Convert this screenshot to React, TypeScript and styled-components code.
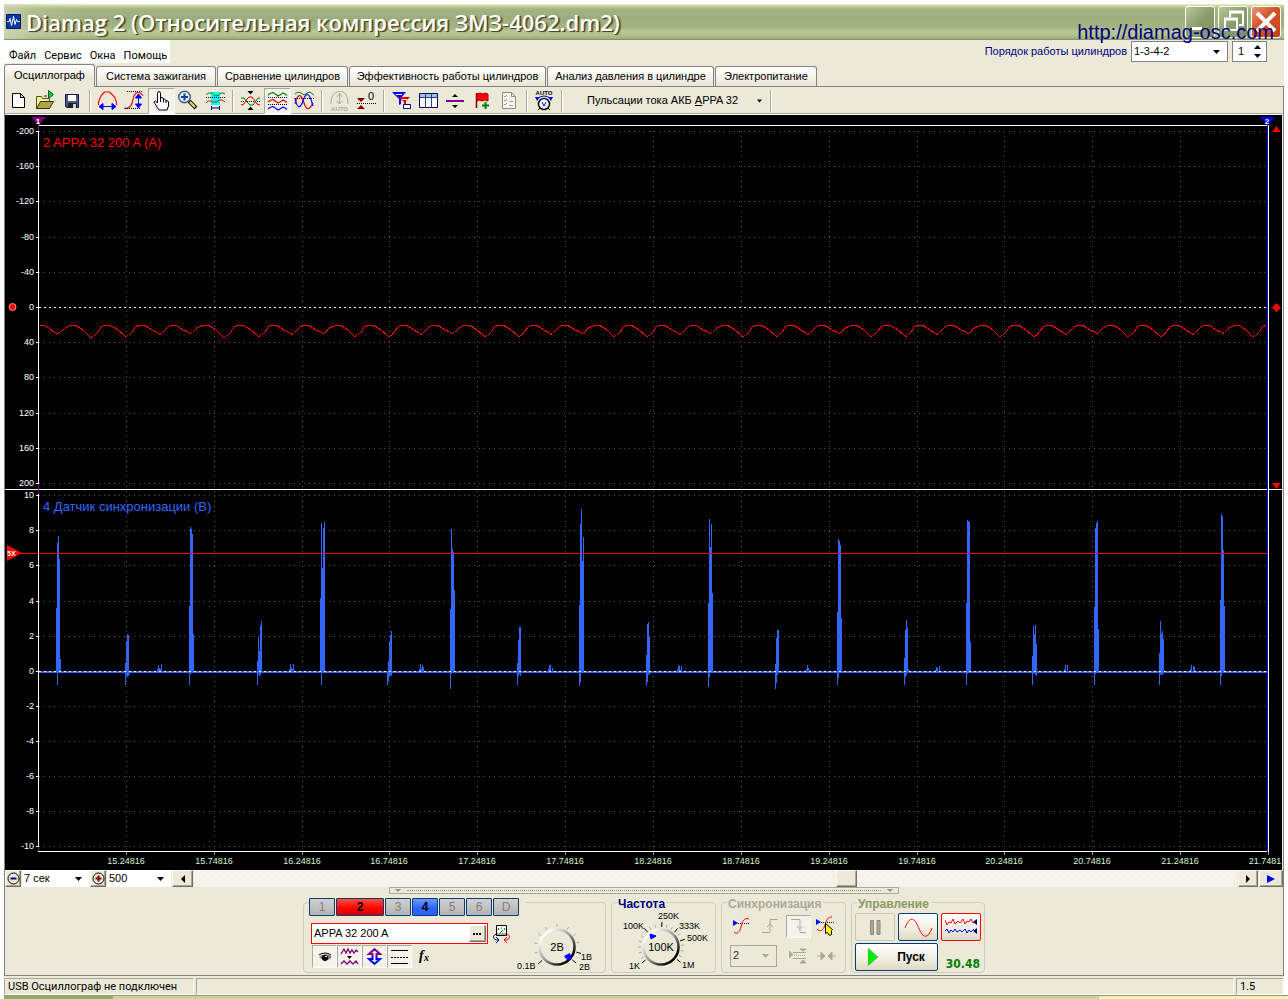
import React from "react";
import styled, { createGlobalStyle, css } from "styled-components";

const FACE = "#ece9d8";
const UI_FONT = `"Liberation Sans", Arial, sans-serif`;
const MENU_FONT = `Roboto, Tahoma, sans-serif`;

const Global = createGlobalStyle`
  * { box-sizing: border-box; }
  body { margin: 0; background: #fdfefe; font: 11px/13px ${UI_FONT}; color: #000; }
  button, input, select { font: inherit; color: inherit; margin: 0; padding: 0; }
  svg { display: block; }
`;

const Page = styled.div`
  display: flex;
  flex-direction: column;
  min-height: 100vh;
  padding: 4px 4px 0;
`;

const Window = styled.main`
  position: relative;
  display: flex;
  flex-direction: column;
  background: ${FACE};
`;

/* ---------- title bar ---------- */

const TitleBar = styled.header`
  display: flex;
  align-items: center;
  height: 36px;
  padding: 0 3px 0 1px;
  border-bottom: 1px solid #839669;
  background:
    linear-gradient(90deg, rgba(212, 214, 184, 0.8) 0, rgba(200, 206, 168, 0.4) 28px, transparent 90px),
    linear-gradient(#eef7cf 0, #c8d69c 2px, #a3b383 5px, #9dad7c 14px, #a4b483 24px, #b9c795 27px, #b4c28f 31px, #96a777 36px);
`;

const Title = styled.h1`
  flex: 1;
  margin: 0 0 0 4px;
  color: #fff;
  font: 600 22px/30px "Open Sans", "Noto Sans", sans-serif;
  white-space: nowrap;
  text-shadow: 1px 1px 0 #4a4a20, 2px 1px 1px #5c5c30;
`;

const CaptionButtons = styled.div`
  display: flex;
  gap: 3px;
`;

const CaptionButton = styled.button<{ $close?: boolean }>`
  width: 30px;
  height: 32px;
  border: 1px solid #fff;
  border-radius: 3px;
  background: ${(p) =>
    p.$close
      ? "linear-gradient(135deg, #e8987a, #d4572f 40%, #c23f17)"
      : "linear-gradient(135deg, #b9c59a, #8b9d6b 50%, #7d9060)"};
`;

const SiteLink = styled.a`
  position: absolute;
  top: 17px;
  right: 10px;
  color: #000080;
  font-size: 20px;
  line-height: 22px;
  text-decoration: none;
`;

/* ---------- menu and cylinder order ---------- */

const MenuRow = styled.div`
  display: flex;
  align-items: flex-start;
  height: 24px;
`;

const Menu = styled.nav`
  display: flex;
  gap: 8px;
  width: 166px;
  height: 23px;
  padding: 8px 0 0 5px;
  background: #fdfefe;
  font-family: ${MENU_FONT};
`;

const MenuItem = styled.button`
  border: 0;
  background: none;
  line-height: 14px;
`;

const OrderForm = styled.form`
  display: flex;
  align-items: flex-start;
  gap: 4px;
  margin-left: auto;
  padding: 1px 17px 0 0;
`;

const OrderLabel = styled.label`
  color: #000080;
  line-height: 21px;
`;

const SelectBox = styled.span<{ $w: number; $h: number; $frame?: string; $back?: string }>`
  display: inline-grid;
  align-items: center;
  width: ${(p) => p.$w}px;
  height: ${(p) => p.$h}px;
  border: ${(p) => (p.$frame ? `1px solid ${p.$frame}` : "0")};
  background: ${(p) => p.$back ?? "#fff"};
  & > * { grid-area: 1 / 1; }
  & > svg { justify-self: end; margin-right: 7px; pointer-events: none; }
`;

const Select = styled.select`
  appearance: none;
  width: 100%;
  height: 100%;
  padding-left: 2px;
  border: 0;
  background: none;
`;

const Spin = styled.span`
  display: flex;
  width: 35px;
  height: 21px;
  border: 1px solid #848284;
  background: #fff;
`;

const SpinInput = styled.input`
  width: 18px;
  padding-left: 5px;
  border: 0;
  background: none;
`;

const SpinButtons = styled.span`
  display: grid;
  grid-template-rows: 1fr 1fr;
  width: 12px;
`;

const BareButton = styled.button`
  display: grid;
  place-items: center;
  border: 0;
  background: none;
`;

const Arrow = ({ dir = "down", color = "#000", size = 7 }: { dir?: "up" | "down" | "left" | "right"; color?: string; size?: number }) => {
  const path = { up: "M0 4h7L3.500 0z", down: "M0 0h7L3.500 4z", left: "M4 0v8L0 4z", right: "M0 0v8l4-4z" }[dir];
  const flat = dir === "up" || dir === "down";
  return (
    <svg width={flat ? size : 4} height={flat ? 4 : 8} viewBox={flat ? "0 0 7 4" : "0 0 4 8"}>
      <path d={path} fill={color} />
    </svg>
  );
};

/* ---------- tabs ---------- */

const TabRow = styled.div`
  display: flex;
  align-items: flex-end;
  gap: 1px;
  height: 22px;
`;

const Tab = styled.button<{ $w: number; $active?: boolean }>`
  width: ${(p) => p.$w}px;
  height: 20px;
  border: 1px solid #848284;
  border-bottom: 0;
  border-radius: 3px 3px 0 0;
  background: linear-gradient(#fff, #f4f2e8 60%, #e8e5d6);
  white-space: nowrap;
  ${(p) =>
    p.$active &&
    css`
      z-index: 1;
      height: 23px;
      margin-bottom: -1px;
      padding-bottom: 2px;
      background: linear-gradient(#fff, ${FACE} 60%);
    `}
`;

const TabPage = styled.section`
  display: flex;
  flex-direction: column;
  border: 1px solid #848284;
`;

/* ---------- toolbar ---------- */

const Toolbar = styled.div`
  display: flex;
  align-items: center;
  height: 28px;
  border-bottom: 1px solid #fff;
  box-shadow: inset 0 -1px 0 #aca899;
`;

const checker = css`
  background-color: #fff;
  background-image: conic-gradient(#ece9d8 25%, #fff 0 50%, #ece9d8 0 75%, #fff 0);
  background-size: 2px 2px;
`;

const ToolButton = styled.button<{ $pressed?: boolean }>`
  width: 27px;
  height: 26px;
  border: 1px solid transparent;
  background: none;
  ${(p) =>
    p.$pressed &&
    css`
      ${checker}
      border-color: #aca899 #fff #fff #aca899;
    `}
  & > svg { width: 25px; height: 24px; }
`;

const Separator = styled.span`
  width: 2px;
  height: 22px;
  margin: 0 3px;
  border-left: 1px solid #aca899;
  border-right: 1px solid #fff;
`;

const PresetButton = styled.button`
  display: flex;
  align-items: center;
  gap: 19px;
  margin-left: 16px;
  padding: 0 5px;
  border: 0;
  background: none;
  white-space: nowrap;
`;

const blueArrowH = (
  <path d="M4 17.500h17M4 17.500l4-3v6zM21 17.500l-4-3v6z" stroke="#00f" fill="#00f" />
);

const wave = (y: number, color: string) => (
  <path d={`M3 ${y}l2-1.500 3-1 3 2 2 1.500 2-1 3-2 2 1 2 1.500`} stroke={color} fill="none" strokeWidth="1.200" />
);

const dotted = (y: number, x1 = 3, x2 = 22) => (
  <path d={`M${x1} ${y}H${x2}`} stroke="#000" strokeDasharray="1 1" />
);

const icons: Record<string, React.ReactNode> = {
  create: <path d="M6.500 4.500h8l4 4v10h-12zM14.500 4.500v4h4" fill="#fff" stroke="#000" />,
  open: (
    <>
      <path d="M3.500 19.500v-12h5l1 2h7v4" fill="#f8f0a0" stroke="#555500" />
      <path d="M3.500 19.500l4-7h13l-4 7z" fill="#b0a848" stroke="#333300" />
      <path d="M15.500 1.500v8l5-4z" fill="#00d040" stroke="#006020" />
      <path d="M11 7h3" stroke="#222" />
    </>
  ),
  save: (
    <>
      <path d="M5.500 5.500h13v13h-12l-1-1z" fill="#4c5890" stroke="#101840" />
      <path d="M8 6h8v6H8z" fill="#fff" />
      <path d="M8 14h9v5H8z" fill="#202020" />
      <path d="M13 15h3v4h-3z" fill="#d0d0d0" />
    </>
  ),
  width: (
    <>
      <path d="M3.500 16v-3l2-5 2-3 2-2h5l2 2 3 3 2 5v3" fill="none" stroke="#f00" strokeWidth="1.200" />
      {blueArrowH}
    </>
  ),
  height: (
    <>
      <path d="M2 19.500c7 0 8-4 9-9s2-7 5-7 3 1 5 3" fill="none" stroke="#f00" strokeWidth="1.200" />
      {dotted(2.500, 5, 21)}
      {dotted(19.500, 3, 18)}
      <path d="M16.500 6v12M16.500 5l-3 4h6zM16.500 19l-3-4h6z" stroke="#00f" fill="#00f" />
    </>
  ),
  hand: (
    <path
      d="M8.500 14V4.500q0-2 1.500-2t1.500 2V10q0-2 1.500-1.500t1.500 1.500v.5q1-1.500 2.500 1v.5q2-1 2.500 1v4l-1.500 4h-8l-2-3-3-5q1.500-2 3 .5zM11.500 10v3M14.500 10.500v3M17 11.500v2.500"
      fill="#fff"
      stroke="#000"
    />
  ),
  zoom: (
    <>
      <path d="M13 12l7 7" stroke="#222" strokeWidth="4" />
      <path d="M14 13l5 5" stroke="#f0e060" strokeWidth="2" />
      <circle cx="8.500" cy="8" r="5.800" fill="#d8ecff" stroke="#4c5880" strokeWidth="1.400" />
      <path d="M5 8h7M8.500 4.500v7" stroke="#1040a0" strokeWidth="2" />
    </>
  ),
  segment: (
    <>
      <path d="M8 3h9v13H8z" fill="#0ff" />
      <path d="M3 5.500l3-1.500h3l2 2 2 1 3-1 2-2h2l2 1" stroke="#008000" fill="none" />
      {dotted(8.500)}
      <path d="M3 14l2-2h3l2 1h4l2-2h3l3 2" stroke="#c02000" fill="none" />
      <path d="M8.500 17v4M16.500 17v4M9 19h8" stroke="#000080" />
    </>
  ),
  zero: (
    <>
      {dotted(12.500)}
      <path d="M3 9l3 0 3 4 3 3h3l3-4 2-3h2" stroke="#008000" fill="none" />
      <path d="M3 16l3-1 3-5 2-2h3l3 4 2 3 3 1" stroke="#e00000" fill="none" />
      <path d="M9.500 2h6l-3 3.500zM9.500 21h6l-3-3.500z" fill="#000" />
    </>
  ),
  spread: (
    <>
      {wave(6, "#008000")}
      {dotted(8.500)}
      {wave(13, "#e00000")}
      {dotted(15.500)}
      {wave(20, "#00f")}
    </>
  ),
  overlay: (
    <>
      <path d="M3 5l3-2 3 1 3 2 3-2 3-1 4 3" stroke="#008000" fill="none" />
      {dotted(9.500)}
      <path d="M3 15c3-12 6-10 9-1s6 6 9 0" stroke="#e00000" fill="none" strokeWidth="1.200" />
      <path d="M3 9c2 10 5 12 8 3s6-10 10 5" stroke="#00f" fill="none" strokeWidth="1.200" />
    </>
  ),
  auto: (
    <>
      <path d="M4 15C4 7 7 3 12.500 2.500S21 7 21 15M12.500 4v11M9.500 8l3-3 3 3M9.500 12l3 3 3-3" stroke="#aca899" fill="none" />
      <text x="12.500" y="22" fontSize="6" fontWeight="bold" textAnchor="middle" fill="#aca899">AUTO</text>
    </>
  ),
  level: (
    <>
      <path d="M3 9h8l-4 4zM3 20h8l-4-4z" fill="#800000" />
      {dotted(14.500)}
      <text x="14" y="11" fontSize="11">0</text>
    </>
  ),
  filter: (
    <>
      <path d="M3 3h14l-5 6v6l-2 1V10z" fill="#00f" />
      <path d="M9 8h12l-4 4v6l-2 1v-6z" fill="#e00000" />
      <path d="M7 5.500h6M13 10.500h5" stroke="#fff" />
      <path d="M14.500 15.500h7v4h-7z" fill="#fff" stroke="#000080" />
    </>
  ),
  table: (
    <>
      <path d="M3.500 4.500h18v14h-18z" fill="#fff" stroke="#000060" />
      <path d="M4 5h17v3H4z" fill="#a0c0f0" />
      <path d="M4 8.500h17M9.500 5v14M15.500 5v14" stroke="#204080" />
    </>
  ),
  divide: (
    <>
      <path d="M3 12h18" stroke="#800080" strokeWidth="2" />
      <path d="M9 8h6l-3-3zM9 16h6l-3 3z" fill="#000" />
    </>
  ),
  flag: (
    <>
      <path d="M6.500 4v15" stroke="#800000" strokeWidth="1.500" />
      <path d="M7 5l3-1 3 1 2-1 3 1v7l-3-1-3 1-3-1-2 1z" fill="#f00" stroke="#a00000" />
      <path d="M15.500 13v7M12 16.500h7" stroke="#008000" strokeWidth="2" />
    </>
  ),
  list: (
    <>
      <path d="M5.500 3.500h9l4 4v12h-13zM14.500 3.500v4h4" fill="#f6f4ec" stroke="#908c80" />
      <path d="M7 7l1 1 2-2M7 11l1 1 2-2M7 15l1 1 2-2M12 12.500h4M12 16.500h4" stroke="#a09c90" fill="none" />
    </>
  ),
  autoSet: (
    <>
      <text x="12" y="6" fontSize="6" fontWeight="bold" textAnchor="middle">AUTO</text>
      <path d="M3 8h5l-3 4zM21 8h-5l3 4z" fill="#00f" />
      <path d="M6 9q6-4 12 0" stroke="#00f" fill="none" />
      <circle cx="12" cy="15" r="5.500" fill="#fff" stroke="#111" strokeWidth="1.600" />
      <path d="M10 13l2 4 2-4" stroke="#00f" fill="none" />
      <path d="M6 21l2-2M18 21l-2-2" stroke="#000" />
    </>
  ),
};

const toolGroups: { id: string; label: string; pressed?: boolean }[][] = [
  [{ id: "create", label: "Новый" }, { id: "open", label: "Открыть" }, { id: "save", label: "Сохранить" }],
  [
    { id: "width", label: "Ширина" },
    { id: "height", label: "Высота" },
    { id: "hand", label: "Рука", pressed: true },
    { id: "zoom", label: "Лупа" },
    { id: "segment", label: "Участок" },
  ],
  [{ id: "zero", label: "Ноль" }, { id: "spread", label: "Раздельно", pressed: true }, { id: "overlay", label: "Вместе" }],
  [{ id: "auto", label: "Авто" }, { id: "level", label: "Уровень нуля" }],
  [
    { id: "filter", label: "Фильтр" },
    { id: "table", label: "Таблица" },
    { id: "divide", label: "Разделить" },
    { id: "flag", label: "Маркер" },
    { id: "list", label: "Список" },
  ],
  [{ id: "autoSet", label: "Автоустановка" }],
];

/* ---------- chart ---------- */

const ChartSvg = styled.svg`
  width: calc(100% - 1px);
  height: auto;
  background: #000;
  font-family: ${UI_FONT};
`;

const upperY = [131, 166, 201, 237, 272, 307, 342, 377, 413, 448, 483];
const lowerY = [495, 530, 565, 601, 636, 671, 706, 741, 776, 811, 846];
const ticks = [
  ...upperY.map((y, i) => ({ y, v: (i - 5) * 40 })),
  ...lowerY.map((y, i) => ({ y, v: (5 - i) * 2 })),
];
const timeTicks = Array.from({ length: 14 }, (_, i) => ({
  x: Math.floor(126.4 + i * 87.85),
  label: i === 13 ? "21.7481" : (15.24816 + i * 0.5).toFixed(5),
}));

const dips: [number, number][] = [
  [57, 333], [90, 337], [125, 336], [159, 334], [189, 333], [223, 337], [258, 336], [291, 334],
  [322, 333], [354, 336], [388, 336], [420, 334], [451, 333], [484, 336], [518, 336], [550, 334],
  [581, 333], [613, 336], [646, 336], [679, 334], [709, 333], [742, 336], [776, 336], [807, 334],
  [838, 333], [870, 336], [905, 336], [936, 334], [967, 333], [999, 336], [1033, 336], [1065, 334],
  [1096, 333], [1127, 336], [1160, 336], [1192, 334], [1222, 333], [1252, 336],
];

const currentTrace = (() => {
  const pts: string[] = ["39,325", "44,325", "49,328", "54,332"];
  dips.forEach(([x, y], i) => {
    const next = dips[i + 1] ?? [1286, 333];
    const span = next[0] - x;
    const at = (t: number, py: number) => {
      const px = x + span * t;
      if (px <= 1267) pts.push(`${Math.round(px)},${py}`);
    };
    at(0, y);
    at(0.08, y - 1);
    at(0.2, y - 5);
    at(0.3, 326);
    at(0.4, 325);
    at(0.55, 325);
    at(0.68, 327);
    at(0.8, 330);
    at(0.93, next[1] - 2);
  });
  return pts.join(" ");
})();

/* One burst per entry: first column, tops of its columns, then the undershoot depths. */
const bursts: [number, number[], number[]][] = [
  [56, [608, 543, 536, 559, 659], [0, 685]],
  [125, [663, 641, 634, 635], [685, 675, 677, 676, 674]],
  [157, [669, 665, 668, 669, 664], []],
  [189, [606, 527, 529, 534, 634], [685, 674]],
  [257, [661, 637, 651, 626, 621], [685, 674, 676, 675]],
  [289, [669, 664, 668, 669, 664], []],
  [320, [598, 523, 568, 528, 522], [0, 685]],
  [387, [672, 661, 641, 635, 631], [685, 681, 676, 675, 676]],
  [419, [669, 664, 669, 665, 667], []],
  [450, [609, 529, 549, 552, 590], [689, 674]],
  [517, [663, 640, 627, 627], [685, 676, 674, 676]],
  [548, [669, 665, 665, 672, 668], []],
  [579, [605, 524, 509, 561, 537], [686, 682]],
  [646, [655, 624, 622, 636], [685, 682, 674, 675]],
  [677, [669, 665, 666, 670, 666], []],
  [708, [603, 519, 547, 524, 593], [687, 677]],
  [775, [664, 638, 630, 630], [689, 683, 675]],
  [806, [669, 665, 668, 672, 670], []],
  [837, [612, 539, 541, 545, 618], [685, 678]],
  [904, [658, 630, 620, 628, 669], [685, 677, 675]],
  [935, [670, 667, 668, 672, 666], []],
  [966, [603, 520, 521, 522, 642], [685, 674]],
  [1032, [656, 626, 634, 625, 644], [685, 674, 673, 675, 676]],
  [1064, [669, 665, 672, 665], []],
  [1094, [607, 528, 523, 521, 629], [685, 674]],
  [1159, [653, 621, 634, 631, 639], [685, 675, 674, 675]],
  [1190, [669, 665, 672, 666, 667], []],
  [1220, [600, 514, 516, 550, 606], [685, 676]],
];

const syncTrace = bursts
  .map(([x, tops, lows]) =>
    tops.map((t, i) => `M${x + i}.5 ${t}V672`).join("") +
    lows.map((l, i) => (l ? `M${x + i}.5 672V${l}` : "")).join(""),
  )
  .join("");

const Chart = () => (
  <ChartSvg viewBox="5 115 1277 755" role="img" aria-label="Осциллограмма">
    <g shapeRendering="crispEdges" fill="none">
      <path d={syncTrace} stroke="#3366ff" />
      <g stroke="#545454" strokeDasharray="1 4">
        {ticks.map((t) => (
          <path key={t.y} d={`M39 ${t.y}.5H1267`} />
        ))}
        {timeTicks.map((t) => (
          <path key={t.x} d={`M${t.x}.5 131V850`} />
        ))}
      </g>
      <path d="M39 672H1267" stroke="#3366ff" strokeWidth="2" />
      <path d="M39 307.500H1267M39 671.500H1267" stroke="#fff" strokeDasharray="2 3" />
      <polyline points={currentTrace} stroke="#f00" transform="translate(.5 .5)" />
      <path d="M8 553.500H1267" stroke="#f00" />
      <path d="M38 125.500H1268M38.500 125V852M38 851.500H1269M1268.500 125V852M5 489.500H1282" stroke="#fff" />
      <path d={ticks.map((t) => `M36 ${t.y}.5h2`).join("")} stroke="#fff" />
      <path d={timeTicks.map((t) => `M${t.x}.5 852v3`).join("")} stroke="#999" />
      <path d="M38.500 124v7M38.500 484v10M38.500 847v4" stroke="#800080" />
      <path d="M1267.500 124V852" stroke="#00f" />
    </g>
    <path d="M31 117h15l-7.500 8z" fill="#800080" />
    <path d="M1260 117h15l-7.500 8z" fill="#00f" />
    <text x="38" y="124" fontSize="8" fontWeight="bold" fill="#fff" textAnchor="middle">1</text>
    <text x="1267" y="124" fontSize="8" fontWeight="bold" fill="#fff" textAnchor="middle">2</text>
    <path d="M1272 132h9l-4.500-6zM1272 483h9l-4.500 6zM1272 307.500l4.500-4.500 4.500 4.500-4.500 4.500z" fill="#f00" />
    <circle cx="12.500" cy="307" r="3.500" fill="#f00" stroke="#ff9090" />
    <path d="M7 545l15 8-15 8z" fill="#f00" />
    <text x="7" y="556" fontSize="7" fontWeight="bold" fill="#fff">5X</text>
    <g fontSize="9" fill="#fff" textAnchor="end">
      {ticks.map((t) => (
        <text key={t.y} x="34" y={t.y + 3}>{t.v}</text>
      ))}
    </g>
    <g fontSize="9" fill="#d4f4d0" textAnchor="middle">
      {timeTicks.map((t) => (
        <text key={t.x} x={t.label.length < 8 ? t.x - 3 : t.x} y="864">{t.label}</text>
      ))}
    </g>
    <g fontSize="13">
      <text x="43" y="147" fill="#f00">2 APPA 32 200 A (A)</text>
      <text x="43" y="511" fill="#3366ff">4 Датчик синхронизации (В)</text>
    </g>
  </ChartSvg>
);

/* ---------- time scroll row ---------- */

const ScrollRow = styled.div`
  display: flex;
  align-items: stretch;
  gap: 1px;
  height: 17px;
  background: ${FACE};
`;

const RaisedButton = styled.button<{ $w: number }>`
  display: grid;
  place-items: center;
  flex: none;
  width: ${(p) => p.$w}px;
  border: 1px solid;
  border-color: #fff #716f64 #716f64 #fff;
  background: ${FACE};
  box-shadow: inset -1px -1px 0 #aca899;
`;

const Track = styled.div`
  display: flex;
  flex: 1;
  ${checker}
`;

const Spacer = styled.span<{ $grow: number }>`
  flex: ${(p) => p.$grow} 1 0;
`;

/* ---------- control panel ---------- */

const Panel = styled.div`
  display: flex;
  flex-direction: column;
  align-items: center;
  height: 88px;
`;

const Splitter = styled.div`
  display: flex;
  align-items: center;
  justify-content: space-between;
  gap: 6px;
  width: 510px;
  height: 7px;
  padding: 0 5px;
  border: 1px solid #aca899;
  &::before, &::after {
    content: "";
    border: 3px solid transparent;
    border-top: 3px solid #8c9b62;
    border-bottom: 0;
  }
`;

const SplitterDots = styled.span`
  flex: 1;
  border-top: 1px dotted #9ca078;
`;

const Groups = styled.div`
  display: flex;
  gap: 5px;
  margin-top: 8px;
`;

const Group = styled.section<{ $w: number }>`
  display: flex;
  flex-direction: column;
  width: ${(p) => p.$w}px;
  height: 71px;
  border: 1px solid #d0cdbc;
  border-radius: 4px;
`;

const GroupTitle = styled.h2<{ $color: string }>`
  align-self: flex-start;
  margin: -6px 0 0 5px;
  padding: 0 1px;
  background: ${FACE};
  color: ${(p) => p.$color};
  font: bold 12px/14px ${UI_FONT};
`;

const ChannelLayout = styled.div`
  display: flex;
  align-items: flex-end;
  justify-content: space-between;
  height: 74px;
  margin-top: -5px;
  padding: 0 3px 0 5px;
`;

const ChannelColumn = styled.div`
  display: flex;
  flex-direction: column;
  align-items: flex-start;
  align-self: flex-start;
  flex: none;
  margin-right: -12px;
`;

const ChannelTabs = styled.div`
  display: flex;
  gap: 1px;
  padding-right: 7px;
  background: ${FACE};
`;

const ChannelTab = styled.button<{ $tone?: "red" | "blue" }>`
  width: ${(p) => (p.$tone === "red" ? 48 : 26)}px;
  height: 18px;
  border: 1px solid #003c74;
  border-radius: 1px;
  color: ${(p) => (p.$tone ? "#000" : "#808080")};
  font-size: 12px;
  font-weight: ${(p) => (p.$tone ? "bold" : "normal")};
  background: ${(p) =>
    p.$tone === "red"
      ? "linear-gradient(#ff5040, #f00 60%, #d80000)"
      : p.$tone === "blue"
        ? "linear-gradient(#6c98ff, #2c62ff 60%)"
        : "linear-gradient(#d0d0d0, #b4b4b4)"};
`;

const SensorRow = styled.div`
  display: flex;
  align-items: center;
  gap: 4px;
  margin: 7px 0 1px 2px;
`;

const SensorField = styled.span`
  display: flex;
  width: 177px;
  height: 21px;
  padding: 1px;
  border: 1px solid #f00;
  background: #fff;
`;

const SensorInput = styled.input`
  flex: 1;
  min-width: 0;
  padding-left: 1px;
  border: 0;
  background: none;
`;

const SensorTools = styled.div`
  display: flex;
  margin-left: 3px;
`;

const SmallTool = styled.button<{ $pressed?: boolean }>`
  display: grid;
  place-items: center;
  width: 25px;
  height: 23px;
  border: 1px solid transparent;
  background: none;
  ${(p) =>
    p.$pressed &&
    css`
      ${checker}
      border-color: #aca899 #fff #fff #aca899;
    `}
`;

const DialSvg = styled.svg`
  flex: none;
  font-family: ${UI_FONT};
`;

const Dial = ({ cx, cy, value }: { cx: number; cy: number; value: string }) => (
  <>
    <defs>
      <linearGradient id={`rim${cx}`} x1="0" y1="0" x2="1" y2="1">
        <stop offset="0.15" stopColor="#fff" />
        <stop offset="0.5" stopColor="#999" />
        <stop offset="0.85" stopColor="#000" />
      </linearGradient>
    </defs>
    <circle cx={cx} cy={cy} r="17.500" fill={FACE} stroke={`url(#rim${cx})`} strokeWidth="2.500" />
    <text x={cx} y={cy + 4} fontSize="11" textAnchor="middle">{value}</text>
  </>
);

const dialTicks = (cx: number, cy: number, angles: number[], r1 = 20, r2 = 23) =>
  angles
    .map((a) => {
      const r = (a * Math.PI) / 180;
      const p = (d: number) => `${(cx + d * Math.cos(r)).toFixed(1)} ${(cy + d * Math.sin(r)).toFixed(1)}`;
      return `M${p(r1)}L${p(r2)}`;
    })
    .join("");

const VoltageDial = () => (
  <DialSvg width="88" height="56" viewBox="514 916 88 56" role="img" aria-label="2В">
    <path d={dialTicks(557, 947, [165, 190, 215, 240, 270, 300, 325, 348])} stroke="#aca899" />
    <path d={dialTicks(557, 947, [138, 15, 40], 20, 25)} stroke="#000" />
    <Dial cx={557} cy={947} value="2В" />
    <path d="M564 956l6-3 2 6-5 1z" fill="#00f" />
    <g fontSize="9">
      <text x="517" y="969">0.1В</text>
      <text x="581" y="960">1В</text>
      <text x="579" y="970">2В</text>
    </g>
  </DialSvg>
);

const FrequencyDial = () => (
  <DialSvg width="102" height="62" viewBox="612 911 102 62" role="img" aria-label="100K">
    <path d={dialTicks(661, 947, [150, 165, 180, 195, 210, 240, 255, 285, 300, 325, 355, 10, 25])} stroke="#aca899" />
    <path d={dialTicks(661, 947, [140, 228, 272, 312, 342, 38], 20, 25)} stroke="#000" />
    <Dial cx={661} cy={947} value="100K" />
    <path d="M650 934l6 2-5 3z" fill="#00f" stroke="#00f" />
    <g fontSize="9">
      <text x="658" y="919">250K</text>
      <text x="623" y="929">100K</text>
      <text x="679" y="929">333K</text>
      <text x="687" y="941">500K</text>
      <text x="629" y="969">1K</text>
      <text x="682" y="968">1M</text>
    </g>
  </DialSvg>
);

const SyncGrid = styled.div`
  display: grid;
  grid-template-columns: repeat(4, 28px);
  grid-template-rows: 24px 23px;
  row-gap: 6px;
  place-items: center;
  margin: 3px 0 0 6px;
`;

const SyncSelect = styled.span`
  grid-column: span 2;
  justify-self: start;
  margin-left: 2px;
  color: #333;
`;

const ControlGrid = styled.div`
  display: grid;
  grid-template-columns: repeat(3, 40px);
  grid-template-rows: 28px 28px;
  gap: 2px 3px;
  margin: 2px 0 0 3px;
`;

const ControlButton = styled.button<{ $frame: string; $wide?: boolean }>`
  display: flex;
  align-items: center;
  justify-content: center;
  gap: 19px;
  grid-column: span ${(p) => (p.$wide ? 2 : 1)};
  border: 1px solid ${(p) => p.$frame};
  border-radius: 2px;
  background: linear-gradient(#fff, #f0ede0 60%, #dcd8c6);
  font-size: 12px;
  font-weight: bold;
  &:disabled { background: ${FACE}; }
`;

const Readout = styled.output`
  align-self: end;
  padding: 0 1px 0 0;
  color: #008000;
  font: bold 12px/13px "DejaVu Sans Condensed", "DejaVu Sans", sans-serif;
  text-align: right;
`;

/* ---------- status bar ---------- */

const StatusBar = styled.footer`
  display: flex;
  gap: 2px;
  height: 19px;
  padding-top: 2px;
  font-family: ${MENU_FONT};
`;

const StatusCell = styled.span<{ $w?: number }>`
  flex: ${(p) => (p.$w ? `0 0 ${p.$w}px` : "1")};
  padding: 1px 3px 0;
  border: 1px solid;
  border-color: #aca899 #fff #fff #aca899;
  white-space: nowrap;
`;

const TaskBar = styled.div`
  height: 4px;
  margin: 0 -4px 0 0;
  border-top: 1px solid #8d9c6a;
  background: linear-gradient(90deg, #8fae62 0 109px, #c9d6a0 0 1095px, #f4eeb8 0);
`;

const gray = "#aca899";

const tabs: { label: string; w: number; active?: boolean }[] = [
  { label: "Осциллограф", w: 91, active: true },
  { label: "Система зажигания", w: 120 },
  { label: "Сравнение цилиндров", w: 131 },
  { label: "Эффективность работы цилиндров", w: 197 },
  { label: "Анализ давления в цилиндре", w: 167 },
  { label: "Электропитание", w: 102 },
];

const channels: { name: string; tone?: "red" | "blue" }[] = [
  { name: "1" },
  { name: "2", tone: "red" },
  { name: "3" },
  { name: "4", tone: "blue" },
  { name: "5" },
  { name: "6" },
  { name: "D" },
];

export default function App() {
  return (
    <Page>
      <Global />
      <Window>
        <TitleBar>
          <svg width="17" height="17" viewBox="0 0 17 17">
            <path d="M1.500 1.500h14v14h-14z" fill="#0838a8" stroke="#001868" />
            <path d="M2 8.500h2l1-3 1.500 7 2-9 1.500 8 1.500-5 1 2h2.500" fill="none" stroke="#fff" />
          </svg>
          <Title>Diamag 2 (Относительная компрессия ЗМЗ-4062.dm2)</Title>
          <CaptionButtons>
            <CaptionButton aria-label="Свернуть">
              <svg width="28" height="30"><path d="M6 20h10v3H6z" fill="#fff" /></svg>
            </CaptionButton>
            <CaptionButton aria-label="Восстановить">
              <svg width="28" height="30" fill="none" stroke="#fff">
                <path d="M11 10V5h13v13h-4" strokeWidth="2" />
                <path d="M10 5h15" strokeWidth="3" />
                <path d="M6 12h12v11H6z" strokeWidth="2" />
                <path d="M5 12h14" strokeWidth="3" />
              </svg>
            </CaptionButton>
            <CaptionButton $close aria-label="Закрыть">
              <svg width="28" height="30"><path d="M5 6l18 18M23 6L5 24" stroke="#fff" strokeWidth="4" /></svg>
            </CaptionButton>
          </CaptionButtons>
        </TitleBar>
        <SiteLink href="http://diamag-osc.com">http://diamag-osc.com</SiteLink>

        <MenuRow>
          <Menu>
            <MenuItem>Файл</MenuItem>
            <MenuItem>Сервис</MenuItem>
            <MenuItem>Окна</MenuItem>
            <MenuItem>Помощь</MenuItem>
          </Menu>
          <OrderForm>
            <OrderLabel htmlFor="order">Порядок работы цилиндров</OrderLabel>
            <SelectBox $w={97} $h={21} $frame="#848284">
              <Select id="order"><option>1-3-4-2</option></Select>
              <Arrow />
            </SelectBox>
            <Spin>
              <SpinInput aria-label="Цилиндр" defaultValue="1" />
              <SpinButtons>
                <BareButton aria-label="Больше"><Arrow dir="up" /></BareButton>
                <BareButton aria-label="Меньше"><Arrow /></BareButton>
              </SpinButtons>
            </Spin>
          </OrderForm>
        </MenuRow>

        <TabRow role="tablist">
          {tabs.map((t) => (
            <Tab key={t.label} $w={t.w} $active={t.active} role="tab" aria-selected={!!t.active}>{t.label}</Tab>
          ))}
        </TabRow>

        <TabPage>
          <Toolbar>
            {toolGroups.map((group, i) => (
              <React.Fragment key={i}>
                {group.map((b) => (
                  <ToolButton key={b.id} $pressed={b.pressed} aria-label={b.label}>
                    <svg viewBox="0 0 25 24">{icons[b.id]}</svg>
                  </ToolButton>
                ))}
                <Separator />
              </React.Fragment>
            ))}
            <PresetButton>
              <span>Пульсации тока АКБ <u>A</u>PPA 32</span>
              <Arrow size={5} />
            </PresetButton>
            <Separator />
          </Toolbar>

          <Chart />

          <ScrollRow>
            <RaisedButton $w={16} aria-label="Уменьшить">
              <svg width="13" height="13"><circle cx="6.500" cy="6.500" r="5.500" fill="none" stroke="#000" /><path d="M3.500 6.500h6" stroke="#000080" strokeWidth="2" /></svg>
            </RaisedButton>
            <SelectBox $w={67} $h={17}>
              <Select aria-label="Развёртка"><option>7 сек</option></Select>
              <Arrow />
            </SelectBox>
            <RaisedButton $w={16} aria-label="Увеличить">
              <svg width="13" height="13"><circle cx="6.500" cy="6.500" r="5.500" fill="none" stroke="#000" /><path d="M3.500 6.500h6M6.500 3.500v6" stroke="#800000" strokeWidth="2" /></svg>
            </RaisedButton>
            <SelectBox $w={64} $h={17}>
              <Select aria-label="Масштаб"><option>500</option></Select>
              <Arrow />
            </SelectBox>
            <RaisedButton $w={21} aria-label="Назад"><Arrow dir="left" /></RaisedButton>
            <Track>
              <Spacer $grow={643} />
              <RaisedButton $w={21} aria-label="Положение" />
              <Spacer $grow={380} />
            </Track>
            <RaisedButton $w={20} aria-label="Вперёд"><Arrow dir="right" /></RaisedButton>
            <RaisedButton $w={24} aria-label="В конец">
              <svg width="8" height="8"><path d="M0 0v8l8-4z" fill="#00f" /></svg>
            </RaisedButton>
          </ScrollRow>

          <Panel>
            <Splitter><SplitterDots /></Splitter>
            <Groups>
              <Group $w={303}>
                <ChannelLayout>
                  <ChannelColumn>
                    <ChannelTabs>
                      {channels.map((c) => (
                        <ChannelTab key={c.name} $tone={c.tone}>{c.name}</ChannelTab>
                      ))}
                    </ChannelTabs>
                    <SensorRow>
                      <SensorField>
                        <SensorInput aria-label="Датчик" defaultValue="APPA 32 200 A" />
                        <RaisedButton $w={17} aria-label="Выбрать">
                          <svg width="9" height="2"><path d="M0 0h2v2H0zM3 0h2v2H3zM6 0h2v2H6z" /></svg>
                        </RaisedButton>
                      </SensorField>
                      <BareButton aria-label="Прибор">
                        <svg width="20" height="19" viewBox="0 0 20 19">
                          <path d="M4.500 1.500h10v10h-10z" fill="#fff" stroke="#000" />
                          <path d="M6 6l1-2M9 4h1M13 6l-1-2M8 9l3-3" stroke="#060" />
                          <path d="M5 9h9v2H5z" fill="#aaa" />
                          <path d="M4 10c-4 2-3 6 2 6M4 13l3 3-3 3" fill="none" stroke="#000080" />
                          <path d="M15 10c4 2 3 6-2 6M15 13l-3 3 3 3" fill="none" stroke="#f00" />
                        </svg>
                      </BareButton>
                    </SensorRow>
                    <SensorTools>
                      <SmallTool $pressed aria-label="Показать">
                        <svg width="14" height="10"><path d="M1 5q5-5 12-1v2q-6 5-12-1z" fill="#777" /><path d="M1 3q6-4 12 0" stroke="#000" fill="none" /><circle cx="7" cy="6" r="3" /><path d="M7 4h2v1H7z" fill="#fff" /></svg>
                      </SmallTool>
                      <SmallTool $pressed aria-label="Сглаживание">
                        <svg width="19" height="19" fill="none" stroke="#800080" strokeWidth="1.300"><path d="M1 7l3-5 2 4 2-4 2 4 2-3 2 3 2-3 2 2M1 17l3-3 3 3 3-3 3 3 3-3 2 3" /><path d="M7 9h5l-2.500 3z" fill="#000" stroke="none" /></svg>
                      </SmallTool>
                      <SmallTool $pressed aria-label="Инверсия">
                        <svg width="17" height="19" fill="none" strokeWidth="2"><path d="M6.500 9V7H3l5.500-5L14 7h-3.500v2" stroke="#800080" /><path d="M6.500 9v3H3l5.500 5 5.500-5h-3.500V9" stroke="#00f" /></svg>
                      </SmallTool>
                      <SmallTool $pressed aria-label="Линии">
                        <svg width="17" height="14" stroke="#000"><path d="M0 .5h17M0 13.500h17" /><path d="M0 7.500h17" strokeDasharray="2 1" /></svg>
                      </SmallTool>
                      <SmallTool aria-label="Функция">
                        <svg width="16" height="18" fontFamily="Liberation Serif" fontStyle="italic" fontWeight="bold"><text x="2" y="12" fontSize="14">f</text><text x="7" y="13" fontSize="10">x</text></svg>
                      </SmallTool>
                    </SensorTools>
                  </ChannelColumn>
                  <VoltageDial />
                </ChannelLayout>
              </Group>

              <Group $w={105}>
                <GroupTitle $color="#000080">Частота</GroupTitle>
                <FrequencyDial />
              </Group>

              <Group $w={125}>
                <GroupTitle $color={gray}>Синхронизация</GroupTitle>
                <SyncGrid>
                  <BareButton aria-label="Фронт и спад">
                    <svg width="18" height="18"><path d="M0 3v6l5-3z" fill="#00f" /><path d="M5 6.500h12" stroke="#000080" strokeDasharray="1 1" /><path d="M1 15c3 3 6 0 7-5s3-10 8-8" fill="none" stroke="#f00" /></svg>
                  </BareButton>
                  <BareButton aria-label="Фронт">
                    <svg width="18" height="16" fill="none" stroke={gray}><path d="M1 14.500h8v-13h8M6 9l3-3 3 3" /></svg>
                  </BareButton>
                  <SmallTool $pressed aria-label="Спад">
                    <svg width="18" height="16" fill="none" stroke={gray}><path d="M2 1.500h9v13h6M8 8l3 3 3-3" /></svg>
                  </SmallTool>
                  <BareButton aria-label="Выбрать уровень">
                    <svg width="20" height="20"><path d="M0 3v6l5-3z" fill="#00f" /><path d="M5 6.500h14" stroke="#000080" strokeDasharray="1 1" /><path d="M1 13c3 3 6 2 8-4s3-8 7-8" fill="none" stroke="#f00" /><path d="M9.500 7.500v10l2-1 2 3 2-1v-4l1-1z" fill="#ff0" stroke="#000" /></svg>
                  </BareButton>
                  <SyncSelect>
                    <SelectBox $w={47} $h={22} $frame="#aca899" $back={FACE}>
                      <Select aria-label="Канал синхронизации"><option>2</option></Select>
                      <Arrow color={gray} />
                    </SelectBox>
                  </SyncSelect>
                  <BareButton aria-label="Уровни">
                    <svg width="18" height="18" stroke={gray} fill={gray}><path d="M0 4v7l4-3.500zM11 2h6l-3 2zM11 16h6l-3-3z" /><path d="M4 5.500h13M4 11.500h13" /><path d="M5 8.500h12" strokeDasharray="1 1" /></svg>
                  </BareButton>
                  <BareButton aria-label="Свести">
                    <svg width="19" height="10" stroke={gray} fill={gray}><path d="M0 5h5M4 1v8l4-4zM19 5h-5M15 1v8l-4-4z" /></svg>
                  </BareButton>
                </SyncGrid>
              </Group>

              <Group $w={134}>
                <GroupTitle $color="#8a9b62">Управление</GroupTitle>
                <ControlGrid>
                  <ControlButton $frame="#c9c7ba" disabled aria-label="Пауза">
                    <svg width="11" height="15" fill={gray} stroke="#8c8980"><path d="M.5.5h3v14h-3zM7 .5h3v14H7z" /></svg>
                  </ControlButton>
                  <ControlButton $frame="#003c74" aria-label="Синус">
                    <svg width="29" height="19"><path d="M1 10C5-1 10-2 14.500 9.500S24 21 28 10" fill="none" stroke="#f00" /></svg>
                  </ControlButton>
                  <ControlButton $frame="#f00" aria-label="Сигналы">
                    <svg width="32" height="18" fill="none"><path d="M0 2l2 5 2-3 2 1 2-4 2 5 3-3 2 2 3-4 2 5 2-3 2 1 2-3 2 4 2-2" stroke="#f00" /><path d="M0 13l2-2 2 4 2-3 2 2 2-3 2 3 3-2 2 2 3-3 2 4 2-3 2 2 3-3" stroke="#00f" /><path d="M32 1v6l-4-3zM32 10v6l-4-3z" fill="#000080" /></svg>
                  </ControlButton>
                  <ControlButton $frame="#003c74" $wide>
                    <svg width="10" height="18"><path d="M0 0v18l10-9z" fill="#0e0" stroke="#888" strokeWidth=".5" /></svg>
                    Пуск
                  </ControlButton>
                  <Readout>30.48</Readout>
                </ControlGrid>
              </Group>
            </Groups>
          </Panel>
        </TabPage>

        <StatusBar>
          <StatusCell $w={190}>USB Осциллограф не подключен</StatusCell>
          <StatusCell />
          <StatusCell $w={48}>1.5</StatusCell>
        </StatusBar>
      </Window>
      <TaskBar />
    </Page>
  );
}
